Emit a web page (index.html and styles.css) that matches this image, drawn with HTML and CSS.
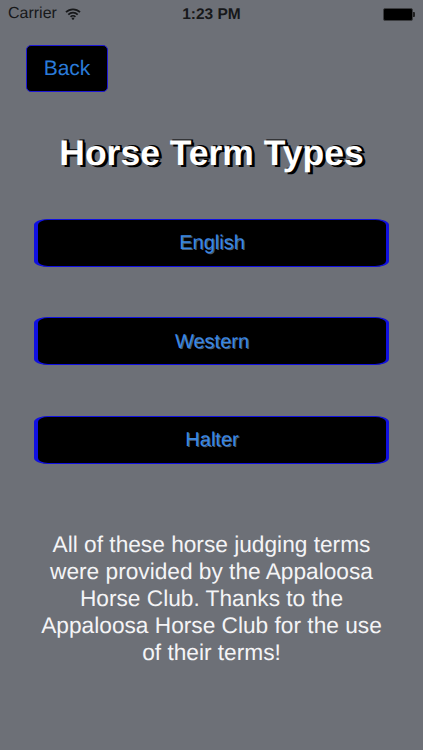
FILE: index.html
```html
<!DOCTYPE html>
<html lang="en">
<head>
  <meta charset="UTF-8">
  <title>Horse Term Types</title>
  <link rel="stylesheet" href="styles.css">
</head>
<body>
  <div class="status-bar">
    <div class="status-left">
      <span>Carrier</span>
      <svg class="wifi" width="16" height="12" viewBox="0 0 16 12">
        <path d="M1 4.2a10 10 0 0 1 14 0" />
        <path d="M3.3 6.6a6.8 6.8 0 0 1 9.4 0" />
        <path d="M5.6 8.8a3.4 3.4 0 0 1 4.8 0" />
        <circle cx="8" cy="10.6" r="1.2" />
      </svg>
    </div>
    <div class="status-time">1:23 PM</div>
    <div class="status-right">
      <div class="battery"></div>
      <div class="battery-tip"></div>
    </div>
  </div>

  <div class="back-row">
    <a class="back-btn">Back</a>
  </div>

  <h1 class="title">Horse Term Types</h1>

  <div class="menu">
    <a class="menu-btn">English</a>
    <a class="menu-btn">Western</a>
    <a class="menu-btn">Halter</a>
  </div>

  <p class="credits">All of these horse judging terms were provided by the Appaloosa Horse Club. Thanks to the Appaloosa Horse Club for the use of their terms!</p>
</body>
</html>
```

FILE: styles.css
```css
body {
  margin: 0;
  width: 423px;
  height: 750px;
  overflow: hidden;
  background: #6d7077;
  font-family: "Liberation Sans", Arial, sans-serif;
  text-rendering: geometricPrecision;
}

.status-bar {
  display: flex;
  justify-content: space-between;
  align-items: center;
  height: 28px;
  padding: 0 8px 0 8px;
  color: #17181a;
  font-size: 16px;
}

.status-left {
  display: flex;
  align-items: center;
  gap: 8px;
  width: 120px;
}

.wifi {
  fill: #17181a;
}

.wifi path {
  fill: none;
  stroke: #17181a;
  stroke-width: 1.8;
}

.status-time {
  padding-top: 1px;
  font-weight: bold;
  font-size: 15.5px;
}

.status-right {
  display: flex;
  align-items: center;
  justify-content: flex-end;
  width: 120px;
}

.battery {
  box-sizing: border-box;
  width: 30px;
  height: 13px;
  background: #000;
  border: 1px solid #3c3d40;
  border-radius: 2px;
}

.battery-tip {
  width: 2px;
  height: 5px;
  background: #222;
  border-radius: 0 1px 1px 0;
}

.back-row {
  padding: 17px 0 0 26px;
}

.back-btn {
  display: flex;
  align-items: center;
  justify-content: center;
  box-sizing: border-box;
  width: 82px;
  height: 47px;
  background: #000;
  border: 1.5px solid #1d17d6;
  border-radius: 5px;
  color: #2a7bd8;
  font-size: 21px;
}

.title {
  margin: 39px 0 0;
  text-align: center;
  color: #fff;
  font-size: 35.5px;
  line-height: 44px;
  font-weight: bold;
  text-shadow: 3px 2px 0 #000, 2px -1px 0 #000;
}

.menu {
  display: flex;
  flex-direction: column;
  gap: 50.5px;
  margin: 43.7px 34px 0 34px;
}

.menu-btn {
  display: flex;
  align-items: center;
  justify-content: center;
  box-sizing: border-box;
  height: 48px;
  padding-top: 2px;
  background: #000;
  border: solid #1010e0;
  border-width: 1px 3px 1px 4px;
  border-radius: 14px / 6px;
  color: #3a88e4;
  font-size: 20px;
  text-shadow: 1px 1px 0 #4a5a70;
}

.credits {
  margin: 67.3px 36px 0;
  text-align: center;
  color: #f4f4f6;
  font-size: 22.7px;
  line-height: 27px;
}
```
